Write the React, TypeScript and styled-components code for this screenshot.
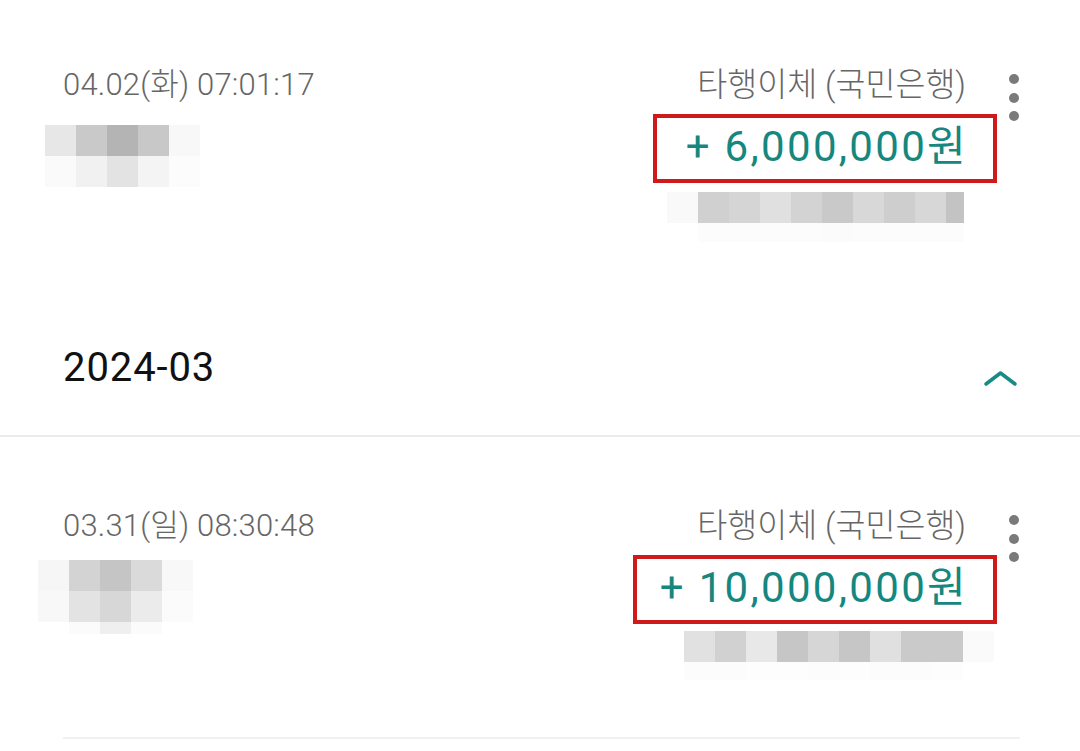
import React from "react";
import styled, { createGlobalStyle } from "styled-components";

const Global = createGlobalStyle`
  html, body { margin: 0; padding: 0; background: #ffffff; }
  body { font-family: Roboto, "Noto Sans CJK KR", sans-serif; overflow: hidden; }
  * { box-sizing: border-box; }
`;

const Page = styled.div`
  width: 1080px;
  height: 751px;
  overflow: hidden;
  display: flex;
  flex-direction: column;
`;

const Entry = styled.div<{ $top: number }>`
  display: flex;
  align-items: flex-start;
  min-height: 300px;
  padding: ${(p) => p.$top}px 61px 0 63px;
`;

const LeftCol = styled.div`
  flex: 1;
  display: flex;
  flex-direction: column;
  align-items: flex-start;
`;

const RightCol = styled.div`
  display: flex;
  flex-direction: column;
  align-items: flex-end;
`;

const DateText = styled.div`
  font-family: Roboto, "Noto Sans CJK KR", sans-serif;
  font-size: 31px;
  font-weight: 300;
  line-height: 40px;
  letter-spacing: 0.2px;
  color: #666666;
  white-space: nowrap;
`;

const TypeText = styled.div`
  font-family: Roboto, "Noto Sans CJK KR", sans-serif;
  font-size: 32.6px;
  font-weight: 300;
  line-height: 40px;
  color: #666666;
  white-space: nowrap;
`;

const Amount = styled.div<{ $boxLeft: number }>`
  position: relative;
  margin-top: 18px;
  margin-right: -2px;
  font-family: Roboto, "Noto Sans CJK KR", sans-serif;
  font-size: 42px;
  line-height: 48px;
  letter-spacing: 2.3px;
  color: #15877f;
  white-space: nowrap;
  &::after {
    content: "";
    position: absolute;
    top: -9px;
    bottom: -12px;
    left: -${(p) => p.$boxLeft}px;
    right: -29px;
    border: 4px solid #cf1a1c;
    pointer-events: none;
  }
`;

const Mosaic = styled.div<{ $w: number; $mt: number; $ml: number; $mr: number }>`
  width: ${(p) => p.$w}px;
  margin: ${(p) => p.$mt}px ${(p) => p.$mr}px 0 ${(p) => p.$ml}px;
  overflow: hidden;
  display: flex;
  flex-direction: column;
`;

const MosaicRow = styled.div<{ $h: number }>`
  display: flex;
  height: ${(p) => p.$h}px;
`;

const Cell = styled.div<{ $c: string }>`
  flex: 0 0 31px;
  height: 100%;
  background: ${(p) => p.$c};
`;

const Kebab = styled.div`
  margin-left: 43px;
  margin-top: 9px;
  display: flex;
  flex-direction: column;
  gap: 8.5px;
`;

const Dot = styled.span`
  width: 10px;
  height: 10px;
  border-radius: 50%;
  background: #7a7a7a;
`;

const MonthHeader = styled.div`
  display: flex;
  align-items: flex-start;
  justify-content: space-between;
  padding: 44px 61px 43px 63px;
  border-bottom: 2px solid #ebebeb;
`;

const MonthText = styled.div`
  font-family: Roboto, sans-serif;
  font-size: 40px;
  line-height: 48px;
  color: #111111;
  letter-spacing: 0.9px;
`;

const Chevron = styled.svg`
  width: 36px;
  height: 48px;
  display: block;
`;

const Separator = styled.div`
  height: 2px;
  margin: 0 60px 0 63px;
  background: #f1f1f1;
`;

type MosaicData = { rows: { h: number; colors: string[] }[] };

const MosaicBlock: React.FC<{ data: MosaicData; w: number; mt: number; ml?: number; mr?: number }> = ({ data, w, mt, ml = 0, mr = 0 }) => (
  <Mosaic $w={w} $mt={mt} $ml={ml} $mr={mr}>
    {data.rows.map((r, i) => (
      <MosaicRow key={i} $h={r.h}>
        {r.colors.map((c, j) => (
          <Cell key={j} $c={c} />
        ))}
      </MosaicRow>
    ))}
  </Mosaic>
);

const left1: MosaicData = {
  rows: [
    { h: 31, colors: ["#e7e7e7", "#c9c9c9", "#b4b4b4", "#c8c8c8", "#f8f8f8"] },
    { h: 31, colors: ["#fafafa", "#f1f1f1", "#e3e3e3", "#f4f4f4", "#fcfcfc"] },
  ],
};

const left2: MosaicData = {
  rows: [
    { h: 31, colors: ["#f6f6f6", "#d3d3d3", "#c5c5c5", "#dadada", "#f8f8f8"] },
    { h: 31, colors: ["#f8f8f8", "#e3e3e3", "#d7d7d7", "#ebebeb", "#fbfbfb"] },
    { h: 12, colors: ["#ffffff", "#fbfbfb", "#efefef", "#fbfbfb", "#ffffff"] },
  ],
};

const right1: MosaicData = {
  rows: [
    { h: 31, colors: ["#f9f9f9", "#d0d0d0", "#d5d5d5", "#e0e0e0", "#d3d3d3", "#c9c9c9", "#d8d8d8", "#cecece", "#d7d7d7", "#c3c3c3"] },
    { h: 19, colors: ["#ffffff", "#fcfcfc", "#fcfcfc", "#fcfcfc", "#fcfcfc", "#fbfbfb", "#fcfcfc", "#fcfcfc", "#fcfcfc", "#fcfcfc"] },
  ],
};

const right2: MosaicData = {
  rows: [
    { h: 31, colors: ["#e1e1e1", "#d1d1d1", "#e8e8e8", "#c6c6c6", "#d6d6d6", "#c6c6c6", "#e0e0e0", "#cacaca", "#cacaca", "#fafafa"] },
    { h: 18, colors: ["#fcfcfc", "#fcfcfc", "#fdfdfd", "#fdfdfd", "#fcfcfc", "#fdfdfd", "#fcfcfc", "#fcfcfc", "#fdfdfd", "#ffffff"] },
  ],
};

const Kebabs = () => (
  <Kebab>
    <Dot />
    <Dot />
    <Dot />
  </Kebab>
);

export default function App() {
  return (
    <Page>
      <Global />
      <Entry $top={65}>
        <LeftCol>
          <DateText>04.02(화) 07:01:17</DateText>
          <MosaicBlock data={left1} w={155} mt={20} ml={-18} />
        </LeftCol>
        <RightCol>
          <TypeText>타행이체 (국민은행)</TypeText>
          <Amount $boxLeft={33}>+ 6,000,000원</Amount>
          <MosaicBlock data={right1} w={297} mt={21} mr={2} />
        </RightCol>
        <Kebabs />
      </Entry>
      <MonthHeader>
        <MonthText>2024-03</MonthText>
        <Chevron viewBox="0 0 36 48">
          <polyline points="3,40 17.5,29 32,40" fill="none" stroke="#178c86" strokeWidth="3.6" strokeLinecap="round" strokeLinejoin="round" />
        </Chevron>
      </MonthHeader>
      <Entry $top={69}>
        <LeftCol>
          <DateText>03.31(일) 08:30:48</DateText>
          <MosaicBlock data={left2} w={155} mt={14} ml={-25} />
        </LeftCol>
        <RightCol>
          <TypeText>타행이체 (국민은행)</TypeText>
          <Amount $boxLeft={27}>+ 10,000,000원</Amount>
          <MosaicBlock data={right2} w={310} mt={19} mr={-28} />
        </RightCol>
        <Kebabs />
      </Entry>
      <Separator />
    </Page>
  );
}
